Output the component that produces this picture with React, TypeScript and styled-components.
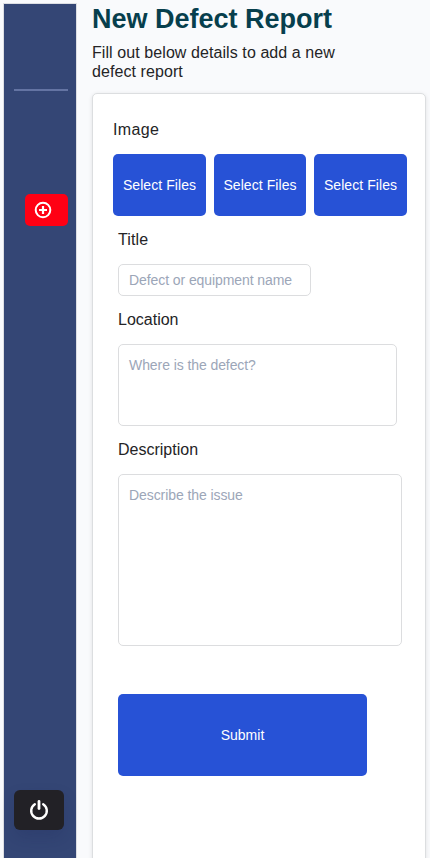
import React from "react";
import styled, { createGlobalStyle } from "styled-components";

const GlobalStyle = createGlobalStyle`
  *, *::before, *::after { box-sizing: border-box; }
  body {
    margin: 0;
    background: #f9fafc;
    color: #242426;
    font-family: "Liberation Sans", Arial, sans-serif;
    font-size: 16px;
    overflow: hidden;
  }
`;

const Page = styled.div`
  display: flex;
  height: 858px;
  gap: 15px;
  padding: 3px 4px 0 3px;
  overflow: hidden;
`;

const Sidebar = styled.nav`
  flex: none;
  display: flex;
  flex-direction: column;
  width: 74px;
  height: 870px;
  padding: 85px 8px 0 10px;
  border: 1px solid #dcdee3;
  background: #344675;
`;

const Divider = styled.hr`
  width: 54px;
  height: 2px;
  margin: 0;
  border: 0;
  background: #6474a3;
`;

const AddButton = styled.button`
  display: flex;
  align-items: center;
  align-self: flex-end;
  width: 43px;
  height: 32px;
  margin-top: 103px;
  padding: 0 0 0 9px;
  border: 0;
  border-radius: 5px;
  background: #ff0014;
  color: #fff;
`;

const PowerButton = styled.button`
  display: flex;
  align-items: center;
  justify-content: center;
  width: 50px;
  height: 40px;
  margin-top: 564px;
  padding: 0;
  border: 0;
  border-radius: 6px;
  background: #222126;
  color: #fff;
  box-shadow: 0 8px 16px rgba(20, 35, 85, 0.18);
`;

const Main = styled.main`
  flex: 1;
  display: flex;
  flex-direction: column;
`;

const Heading = styled.h1`
  flex: none;
  margin: 0 0 8px;
  height: 32px;
  color: #073f4d;
  font-size: 27px;
  line-height: 32px;
  white-space: nowrap;
`;

const Intro = styled.p`
  flex: none;
  width: 270px;
  margin: 0;
  line-height: 19px;
  letter-spacing: 0.08px;
`;

const Card = styled.form`
  display: flex;
  flex-direction: column;
  width: 334px;
  height: 790px;
  flex: none;
  margin-top: 12px;
  padding: 26px 0 0 20px;
  border: 1px solid #dcdee0;
  border-radius: 5px;
  background: #fff;
  box-shadow: 0 1px 4px rgba(0, 0, 0, 0.1);
`;

const Label = styled.label<{ $tracking?: number }>`
  display: block;
  height: 20px;
  margin-bottom: 14px;
  line-height: 20px;
  letter-spacing: ${(p) => p.$tracking ?? 0}px;
`;

const Button = styled.button<{ $width: number; $height: number; $tracking?: number }>`
  width: ${(p) => p.$width}px;
  height: ${(p) => p.$height}px;
  padding: 0;
  border: 0;
  border-radius: 5px;
  background: #2752d6;
  color: #fff;
  font: 14px "Liberation Sans", Arial, sans-serif;
  letter-spacing: ${(p) => p.$tracking ?? 0}px;
  white-space: nowrap;
`;

const FileRow = styled.div`
  display: grid;
  grid-template-columns: 93px 92px 93px;
  gap: 8px;
  margin-bottom: 14px;
`;

const Fields = styled.div`
  display: flex;
  flex-direction: column;
  align-items: flex-start;
  padding-left: 5px;
`;

const controlStyle = `
  display: block;
  border: 1px solid #dcdddf;
  border-radius: 5px;
  background: #fff;
  font: 14px/20px "Liberation Sans", Arial, sans-serif;
  resize: none;
  outline: none;
  &::placeholder { color: #9ca6b8; opacity: 1; }
`;

const TextInput = styled.input`
  ${controlStyle}
  width: 193px;
  height: 32px;
  margin: 0 0 14px;
  padding: 0 10px;
  letter-spacing: -0.08px;
`;

const TextArea = styled.textarea<{ $width: number; $height: number; $gap: number }>`
  ${controlStyle}
  width: ${(p) => p.$width}px;
  height: ${(p) => p.$height}px;
  margin: 0 0 ${(p) => p.$gap}px;
  padding: 10px;
  letter-spacing: -0.08px;
`;

const PlusIcon = () => (
  <svg width="18" height="18" viewBox="0 0 18 18" fill="none" stroke="currentColor" strokeWidth="2">
    <circle cx="9" cy="9" r="7.3" />
    <path d="M9 5v8M5 9h8" strokeWidth="2.2" />
  </svg>
);

const PowerIcon = () => (
  <svg width="20" height="22" viewBox="0 0 20 22" fill="none" stroke="currentColor" strokeLinecap="round">
    <path d="M10 2.4v7.2" strokeWidth="2.8" />
    <path d="M5.8 5.2a7.8 7.8 0 1 0 8.4 0" strokeWidth="2.4" />
  </svg>
);

const fileButtons = [93, 92, 93];

export default function App() {
  return (
    <>
      <GlobalStyle />
      <Page>
        <Sidebar>
          <Divider />
          <AddButton type="button" aria-label="Add">
            <PlusIcon />
          </AddButton>
          <PowerButton type="button" aria-label="Log out">
            <PowerIcon />
          </PowerButton>
        </Sidebar>
        <Main>
          <Heading>New Defect Report</Heading>
          <Intro>Fill out below details to add a new defect report</Intro>
          <Card>
            <Label $tracking={0.35}>Image</Label>
            <FileRow>
              {fileButtons.map((width, i) => (
                <Button key={i} type="button" $width={width} $height={62} $tracking={0.06}>
                  Select Files
                </Button>
              ))}
            </FileRow>
            <Fields>
              <Label htmlFor="title" $tracking={0.1}>Title</Label>
              <TextInput id="title" placeholder="Defect or equipment name" />
              <Label htmlFor="location">Location</Label>
              <TextArea id="location" placeholder="Where is the defect?" $width={279} $height={82} $gap={14} />
              <Label htmlFor="description">Description</Label>
              <TextArea id="description" placeholder="Describe the issue" $width={284} $height={172} $gap={48} />
              <Button type="button" $width={249} $height={82}>
                Submit
              </Button>
            </Fields>
          </Card>
        </Main>
      </Page>
    </>
  );
}
